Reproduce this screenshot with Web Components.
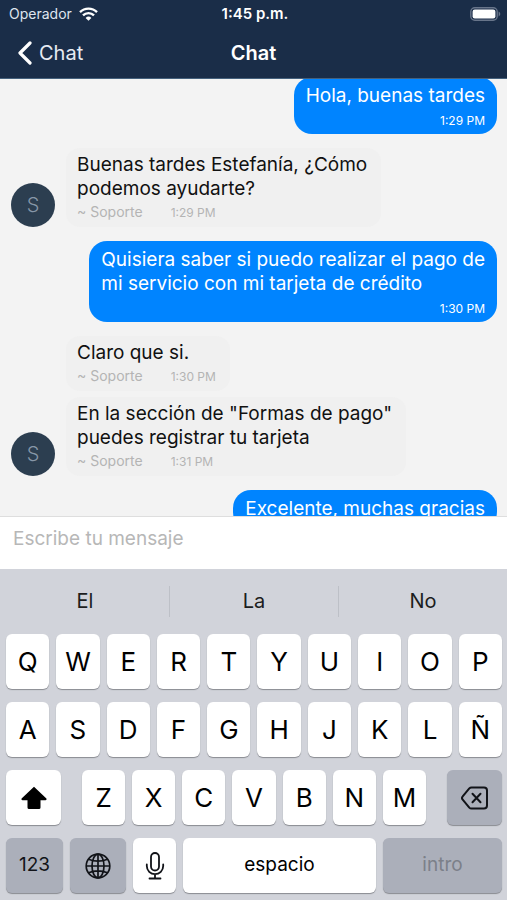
<!DOCTYPE html>
<html lang="es">
<head>
<meta charset="utf-8">
<meta name="viewport" content="width=device-width, initial-scale=1">
<title>Chat</title>
<style>
  html, body { height: 100%; margin: 0; }
  body { font-family: Inter, "Liberation Sans", sans-serif; background: #f3f3f3; }
</style>
</head>
<body>
<chat-app></chat-app>

<script>
const define = (name, html, setup) => {
  const template = document.createElement('template');
  template.innerHTML = html;
  customElements.define(name, class extends HTMLElement {
    constructor() {
      super();
      this.attachShadow({ mode: 'open' }).append(template.content.cloneNode(true));
    }
    connectedCallback() {
      if (setup) setup(this, this.shadowRoot);
    }
  });
};

define('status-bar', `
  <style>
    :host { display: grid; grid-template-columns: 1fr auto 1fr; align-items: center; height: 28px; padding: 0 6px 0 9px; color: #fff; font-size: 14px; line-height: 20px; }
    .carrier { display: flex; align-items: center; gap: 7px; color: #dfe5ee; }
    .time { font-size: 15px; font-weight: 600; }
    .battery { justify-self: end; display: block; }
    svg { display: block; }
  </style>
  <div class="carrier"><span>Operador</span>
    <svg width="19" height="14" viewBox="0 0 19 14" fill="none" stroke="#fff" stroke-width="2.4" aria-label="Wi-Fi">
      <path d="M1 5.2a12 12 0 0 1 17 0"/><path d="M4 8.4a7.8 7.8 0 0 1 11 0"/>
      <path d="M9.5 13.8 6.6 10.9a4.1 4.1 0 0 1 5.8 0z" fill="#fff" stroke="none"/>
    </svg>
  </div>
  <span class="time">1:45 p.m.</span>
  <svg class="battery" width="31" height="14" viewBox="0 0 31 14" aria-label="Batería">
    <rect x=".8" y=".8" width="26.4" height="12.4" rx="4" fill="none" stroke="#68758a" stroke-width="1.4"/>
    <rect x="2.6" y="2.6" width="22.8" height="8.8" rx="2.2" fill="#fff"/>
    <path d="M28.6 4.6c2.2.8 2.2 4 0 4.8z" fill="#68758a"/>
  </svg>`);

define('nav-bar', `
  <style>
    :host { display: grid; grid-template-columns: 1fr auto 1fr; align-items: center; height: 50px; padding: 0 17px; color: #fff; border-bottom: 1px solid #45617d; }
    button { justify-self: start; display: flex; align-items: center; gap: 6px; margin: 0; padding: 0; border: 0; background: none; color: #e6ebf3; font: 400 20px/28px Inter, sans-serif; }
    h1 { margin: 0; font-size: 20px; line-height: 28px; font-weight: 600; }
  </style>
  <button type="button">
    <svg width="16" height="24" viewBox="0 0 16 24" fill="none" stroke="#fff" stroke-width="3.2" stroke-linecap="round" stroke-linejoin="round" aria-hidden="true"><path d="M13 2 3 12l10 10"/></svg>
    <span><slot name="back"></slot></span>
  </button>
  <h1><slot></slot></h1>`);

define('sent-message', `
  <style>
    :host { display: block; align-self: flex-end; box-sizing: border-box; max-width: 84%; padding: 7px 12px 5px; border-radius: 18px; background: #0084ff; color: #fff; font-size: 19px; line-height: 24px; }
    p { margin: 0; }
    time { display: block; margin-top: 4px; text-align: right; font-size: 12px; line-height: 17px; }
  </style>
  <p><slot></slot></p><time></time>`,
  (el, root) => { root.querySelector('time').textContent = el.getAttribute('time'); });

define('received-message', `
  <style>
    :host { display: flex; align-items: flex-end; gap: 11px; }
    .avatar { flex: none; width: 44px; height: 44px; border-radius: 50%; color: #8797a8; background: #2c3e50; font-size: 20px; line-height: 44px; font-weight: 300; text-align: center; }
    :host([grouped]) .avatar { visibility: hidden; height: 0; }
    .bubble { box-sizing: border-box; max-width: 75%; padding: 5px 14px 3px 11px; border-radius: 14px; background: #f0f0f0; color: #111; font-size: 19px; line-height: 24px; }
    p { margin: 0; }
    .meta { display: flex; align-items: baseline; gap: 28px; color: #b4b4b4; font-size: 14px; line-height: 22px; }
    time { font-size: 12px; }
  </style>
  <span class="avatar">S</span>
  <div class="bubble"><p><slot></slot></p><div class="meta"><span>~ Soporte</span><time></time></div></div>`,
  (el, root) => {
    root.querySelector('time').textContent = el.getAttribute('time');
    if (el.hasAttribute('grouped')) root.querySelector('.avatar').textContent = '';
  });

define('message-list', `
  <style>
    :host { display: block; flex: 1 1 0; min-height: 0; overflow-y: auto; scrollbar-width: none; background: #f3f3f3; }
    .items { display: flex; flex-direction: column; gap: 14px; padding: 14px 10px 14px 11px; }
    ::slotted([grouped]) { margin-bottom: -8px; }
  </style>
  <div class="items"><slot></slot></div>`);

define('message-composer', `
  <style>
    :host { display: block; flex: none; background: #fff; border-top: 1px solid #dedede; }
    input { display: block; box-sizing: border-box; width: 100%; height: 52px; margin: 0; padding: 0 13px 10px; border: 0; outline: 0; background: none; color: #111; font: 400 19px/24px Inter, sans-serif; }
    input::placeholder { color: #b7b7b7; opacity: 1; }
  </style>
  <input type="text" aria-label="Escribe tu mensaje" placeholder="Escribe tu mensaje">`);

define('suggestion-bar', `
  <style>
    :host { display: grid; grid-template-columns: repeat(3, 1fr); align-items: center; height: 65px; }
    button { height: 31px; margin: 0; padding: 0; border: 0; border-left: 1px solid #bdc0c7; background: none; color: #1c1d20; font: 400 20px/31px Inter, sans-serif; }
    button:first-of-type { border-left-color: transparent; }
  </style>
  <button type="button">El</button><button type="button">La</button><button type="button">No</button>`);

define('key-cap', `
  <style>
    :host { display: block; min-width: 0; }
    button { display: flex; align-items: center; justify-content: center; box-sizing: border-box; width: 100%; height: 55px; margin: 0; padding: 0; border: 0; border-radius: 6px; background: #fff; box-shadow: 0 1px 1px #898b91; color: #000; font: 400 26px/32px Inter, sans-serif; }
    :host([dark]) button { background: #abafba; color: #111318; }
    :host([word]) button { font-size: 19px; padding-bottom: 2px; }
    :host([disabled]) button { color: #7c8089; }
  </style>
  <button type="button"><slot></slot></button>`,
  (el, root) => {
    const button = root.querySelector('button');
    button.disabled = el.hasAttribute('disabled');
    if (el.hasAttribute('label')) button.setAttribute('aria-label', el.getAttribute('label'));
  });

define('key-row', `
  <style>
    :host { display: grid; grid-auto-flow: column; grid-auto-columns: minmax(0, 1fr); gap: 7px; }
  </style>
  <slot></slot>`,
  el => {
    for (const letter of el.getAttribute('keys')) {
      const key = document.createElement('key-cap');
      key.textContent = letter;
      el.append(key);
    }
  });

define('touch-keyboard', `
  <style>
    :host { display: block; flex: none; background: #d1d3da; }
    .rows { display: grid; gap: 13px; padding: 0 5px 7px 6px; }
    .third { display: grid; grid-template-columns: 55fr 344fr 55fr; gap: 21px; }
    .fourth { display: grid; grid-template-columns: 57fr 56fr 43fr 193fr 119fr; gap: 7px; }
    svg { display: block; }
  </style>
  <suggestion-bar></suggestion-bar>
  <div class="rows">
    <key-row keys="QWERTYUIOP"></key-row>
    <key-row keys="ASDFGHJKLÑ"></key-row>
    <div class="third">
      <key-cap label="Mayúsculas"><svg width="26" height="24" viewBox="0 0 26 24"><path d="M13 .8 25.400 12.600q.7 1.400-.8 1.600H19.500v7.300q0 1.500-1.500 1.500H8q-1.500 0-1.500-1.500v-7.300H1.400q-1.500-.2-.8-1.600z"/></svg></key-cap>
      <key-row keys="ZXCVBNM"></key-row>
      <key-cap dark label="Borrar"><svg width="27" height="24" viewBox="0 0 27 24" fill="none" stroke="#111318" stroke-width="2" stroke-linecap="round" stroke-linejoin="round"><path d="M10.500 1.500h12.500a3 3 0 0 1 3 3v15a3 3 0 0 1-3 3H10.500q-1.300 0-2.200-.9L1.700 13.600q-1.400-1.600 0-3.200l6.600-8q.9-.9 2.200-.9z"/><path d="m11.500 7.800 8 8.400m0-8.400-8 8.400"/></svg></key-cap>
    </div>
    <div class="fourth">
      <key-cap dark word>123</key-cap>
      <key-cap dark label="Cambiar teclado"><svg width="26" height="26" viewBox="0 0 26 26" fill="none" stroke="#111318" stroke-width="1.700"><circle cx="13" cy="13" r="11.800"/><ellipse cx="13" cy="13" rx="6" ry="11.800"/><path d="M13 1v24M1 13h24M3.500 6.200q9.500 4 19 0M3.500 19.800q9.500-4 19 0"/></svg></key-cap>
      <key-cap label="Dictado"><svg width="20" height="28" viewBox="0 0 20 28" fill="none" stroke="#111318" stroke-width="1.800" stroke-linecap="round"><rect x="6" y="1" width="8" height="17.500" rx="4"/><path d="M1.800 12.500v1.500a8.200 8.200 0 0 0 16.400 0v-1.500M10 22.200v4.300M4.500 26.500h11"/></svg></key-cap>
      <key-cap word>espacio</key-cap>
      <key-cap dark word disabled>intro</key-cap>
    </div>
  </div>`);

define('chat-app', `
  <style>
    :host { display: flex; flex-direction: column; height: 100vh; }
    header { flex: none; background: #1a2d48; }
  </style>
  <header>
    <status-bar></status-bar>
    <nav-bar>Chat<span slot="back">Chat</span></nav-bar>
  </header>
  <message-list>
    <sent-message time="1:29 PM">Hola, buenas tardes</sent-message>
    <received-message time="1:29 PM">Buenas tardes Estefanía, ¿Cómo<br>podemos ayudarte?</received-message>
    <sent-message time="1:30 PM">Quisiera saber si puedo realizar el pago de<br>mi servicio con mi tarjeta de crédito</sent-message>
    <received-message time="1:30 PM" grouped>Claro que si.</received-message>
    <received-message time="1:31 PM">En la sección de "Formas de pago"<br>puedes registrar tu tarjeta</received-message>
    <sent-message time="">Excelente, muchas gracias</sent-message>
  </message-list>
  <message-composer></message-composer>
  <touch-keyboard></touch-keyboard>`,
  (el, root) => {
    // The conversation opens slightly scrolled, under the header.
    root.querySelector('message-list').scrollTop = 16;
  });
</script>
</body>
</html>
